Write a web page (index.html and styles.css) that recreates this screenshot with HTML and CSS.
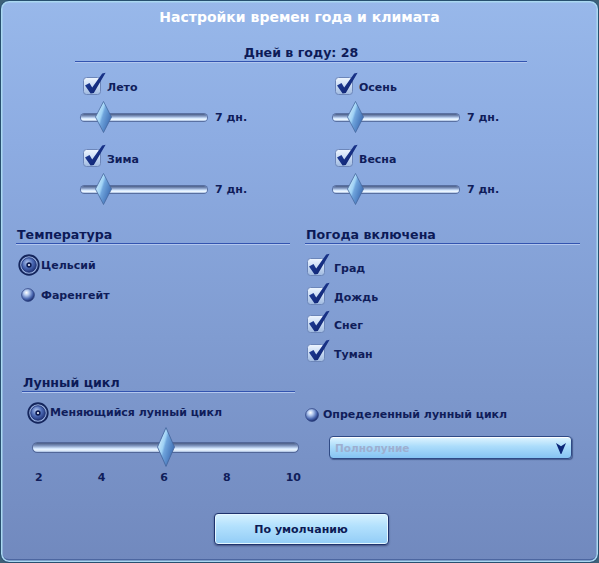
FILE: index.html
```html
<!DOCTYPE html>
<html lang="ru">
<head>
<meta charset="utf-8">
<title>Настройки времен года и климата</title>
<link rel="stylesheet" href="styles.css">
</head>
<body>
<svg class="defs" width="0" height="0" aria-hidden="true">
  <defs>
    <linearGradient id="g-box" x1="0" y1="0" x2="0" y2="1">
      <stop offset="0" stop-color="#eef5ff"/>
      <stop offset="0.5" stop-color="#c9dbf3"/>
      <stop offset="1" stop-color="#9fb9e0"/>
    </linearGradient>
    <linearGradient id="g-check" x1="0" y1="0" x2="1" y2="1">
      <stop offset="0" stop-color="#2446a8"/>
      <stop offset="1" stop-color="#0a1b62"/>
    </linearGradient>
    <radialGradient id="g-ball" cx="0.38" cy="0.32" r="0.7">
      <stop offset="0" stop-color="#ffffff"/>
      <stop offset="0.3" stop-color="#b3c9ef"/>
      <stop offset="0.7" stop-color="#4a67b0"/>
      <stop offset="1" stop-color="#1a2c6a"/>
    </radialGradient>
    <radialGradient id="g-ball-on" cx="0.4" cy="0.35" r="0.7">
      <stop offset="0" stop-color="#b4c9f0"/>
      <stop offset="0.5" stop-color="#4d6bb6"/>
      <stop offset="1" stop-color="#1c2e72"/>
    </radialGradient>
    <linearGradient id="g-thumb" x1="0" y1="0" x2="1" y2="0.6">
      <stop offset="0" stop-color="#e9f8ff"/>
      <stop offset="0.45" stop-color="#9fd2f5"/>
      <stop offset="0.55" stop-color="#6fa4dc"/>
      <stop offset="1" stop-color="#3d6cb3"/>
    </linearGradient>
    <symbol id="i-check" viewBox="0 0 24 24">
      <rect x="1.5" y="5.5" width="17" height="17" rx="3" fill="url(#g-box)" stroke="#6c86b9"/>
      <path d="M3 13.5 L7.5 11 L10.2 15.6 L20.2 1.6 L23.6 0.8 L11.8 21 L8.6 21.4 Z" fill="url(#g-check)"/>
    </symbol>
    <symbol id="i-radio-on" viewBox="0 0 22 22">
      <circle cx="11" cy="11" r="9.7" fill="#9bb3e2" stroke="#14255c" stroke-width="1.9"/>
      <circle cx="11" cy="11" r="7.3" fill="url(#g-ball-on)" stroke="#1d3173" stroke-width="0.8"/>
      <circle cx="11" cy="11" r="2.7" fill="#0b1950"/>
      <circle cx="11" cy="11" r="1.1" fill="#f2f7ff"/>
    </symbol>
    <symbol id="i-radio-off" viewBox="0 0 14 14">
      <circle cx="7" cy="7" r="6.4" fill="url(#g-ball)" stroke="#2a3e7c" stroke-width="0.7"/>
    </symbol>
    <symbol id="i-thumb" viewBox="0 0 18 32" preserveAspectRatio="none">
      <polygon points="9,0.5 17.5,16 9,31.5 0.5,16" fill="url(#g-thumb)" stroke="#46689f" stroke-width="0.8"/>
    </symbol>
  </defs>
</svg>

<div class="window">
  <h1 class="title">Настройки времен года и климата</h1>

  <h2 class="days-head">Дней в году: 28</h2>

  <div class="seasons">
    <div class="season">
      <div class="check"><svg class="cb"><use href="#i-check"/></svg><span>Лето</span></div>
      <div class="slider-row">
        <div class="slider"><div class="track"></div><svg class="thumb" style="left:14px"><use href="#i-thumb"/></svg></div>
        <span class="val">7 дн.</span>
      </div>
    </div>
    <div class="season">
      <div class="check"><svg class="cb"><use href="#i-check"/></svg><span>Осень</span></div>
      <div class="slider-row">
        <div class="slider"><div class="track"></div><svg class="thumb" style="left:14px"><use href="#i-thumb"/></svg></div>
        <span class="val">7 дн.</span>
      </div>
    </div>
    <div class="season">
      <div class="check"><svg class="cb"><use href="#i-check"/></svg><span>Зима</span></div>
      <div class="slider-row">
        <div class="slider"><div class="track"></div><svg class="thumb" style="left:14px"><use href="#i-thumb"/></svg></div>
        <span class="val">7 дн.</span>
      </div>
    </div>
    <div class="season">
      <div class="check"><svg class="cb"><use href="#i-check"/></svg><span>Весна</span></div>
      <div class="slider-row">
        <div class="slider"><div class="track"></div><svg class="thumb" style="left:14px"><use href="#i-thumb"/></svg></div>
        <span class="val">7 дн.</span>
      </div>
    </div>
  </div>

  <div class="mid">
    <section class="temp">
      <h3 class="sec-head">Температура</h3>
      <div class="radio on first"><svg class="rb-on"><use href="#i-radio-on"/></svg><span>Цельсий</span></div>
      <div class="radio off"><svg class="rb-off"><use href="#i-radio-off"/></svg><span>Фаренгейт</span></div>
    </section>
    <section class="weather">
      <h3 class="sec-head">Погода включена</h3>
      <div class="wlist">
        <div class="check"><svg class="cb"><use href="#i-check"/></svg><span>Град</span></div>
        <div class="check"><svg class="cb"><use href="#i-check"/></svg><span>Дождь</span></div>
        <div class="check"><svg class="cb"><use href="#i-check"/></svg><span>Снег</span></div>
        <div class="check"><svg class="cb"><use href="#i-check"/></svg><span>Туман</span></div>
      </div>
    </section>
  </div>

  <div class="moon">
    <section class="moon-left">
      <h3 class="sec-head">Лунный цикл</h3>
      <div class="radio on"><svg class="rb-on"><use href="#i-radio-on"/></svg><span>Меняющийся лунный цикл</span></div>
      <div class="slider big"><div class="track"></div><svg class="thumb" style="left:124px"><use href="#i-thumb"/></svg></div>
      <div class="ticks"><span>2</span><span>4</span><span>6</span><span>8</span><span>10</span></div>
    </section>
    <section class="moon-right">
      <div class="radio off"><svg class="rb-off"><use href="#i-radio-off"/></svg><span>Определенный лунный цикл</span></div>
      <div class="dropdown">
        <span>Полнолуние</span>
        <svg class="arrow" viewBox="0 0 10 12" width="10" height="12"><path d="M0 1 L5 4.2 L10 1 L5.4 12 L4.6 12 Z" fill="#0c2778"/></svg>
      </div>
    </section>
  </div>

  <div class="footer">
    <button class="btn" type="button">По умолчанию</button>
  </div>
</div>
</body>
</html>
```

FILE: styles.css
```css
* {
  box-sizing: border-box;
}

html,
body {
  margin: 0;
  padding: 0;
}

body {
  width: 599px;
  height: 563px;
  overflow: hidden;
  background: #3d6178;
  font-family: "DejaVu Sans", "Noto Sans", sans-serif;
}

.defs {
  display: block;
  width: 0;
  height: 0;
  overflow: hidden;
}

/* dialog frame */
.window {
  width: 599px;
  height: 563px;
  border: 1px solid #27506f;
  border-radius: 9px;
  background: linear-gradient(#98b8ea 0%, #8dace2 25%, #809cd1 60%, #7189be 100%);
  box-shadow: inset 0 0 0 1.5px #aad8f1, inset 0 -3px 0 #4c66a0;
  color: #0d1b58;
}

.title {
  margin: 0;
  height: 33px;
  line-height: 33px;
  text-align: center;
  color: #ffffff;
  font-size: 14px;
  font-weight: bold;
}

.days-head {
  margin: 11px 71px 0 74px;
  font-size: 12.6px;
  line-height: 16px;
  font-weight: bold;
  text-align: center;
  border-bottom: 1px solid #3354b0;
  box-shadow: 0 1px 0 #b3c7ee;
}

/* season checkboxes and sliders */
.seasons {
  display: grid;
  grid-template-columns: 252px 252px;
  padding-left: 81px;
  margin-top: 10px;
  row-gap: 11px;
}

.check {
  display: flex;
  align-items: flex-end;
  height: 24px;
  font-size: 11px;
  font-weight: bold;
  color: #101d5a;
}

.check span {
  line-height: 16px;
  margin-left: 1px;
}

.cb {
  width: 24px;
  height: 24px;
  flex: none;
}

.slider-row {
  display: flex;
  align-items: center;
  height: 32px;
  margin-top: 5px;
}

.slider {
  position: relative;
  width: 126px;
  height: 32px;
  margin-left: -1px;
  flex: none;
}

.track {
  position: absolute;
  left: 0;
  right: 0;
  top: 12.5px;
  height: 7px;
  border-radius: 4px;
  background: linear-gradient(#4a5d86, #7f95bf 30%, #d6e9ff 62%, #eef7ff 78%, #a3bade);
  box-shadow: 0 0 0 1px rgba(62, 80, 128, 0.65);
}

.thumb {
  position: absolute;
  top: 0;
  width: 17px;
  height: 32px;
}

.val {
  margin-left: 8px;
  font-size: 11px;
  font-weight: bold;
  color: #101d5a;
}

/* temperature and weather */
.mid {
  display: grid;
  grid-template-columns: 274px 275px;
  column-gap: 15px;
  padding-left: 15px;
  margin-top: 22px;
}

.sec-head {
  margin: 0;
  padding-left: 1px;
  font-size: 12.6px;
  line-height: 16px;
  font-weight: bold;
  color: #0c1a57;
  border-bottom: 1px solid #3354b0;
  box-shadow: 0 1px 0 #b3c7ee;
}

.radio {
  display: flex;
  align-items: center;
  height: 22px;
  font-size: 11px;
  font-weight: bold;
  color: #101d5a;
}

.rb-on {
  width: 22px;
  height: 22px;
  flex: none;
  margin-right: 1px;
}

.rb-off {
  width: 14px;
  height: 14px;
  flex: none;
  margin-right: 4px;
}

.temp .radio {
  padding-left: 2px;
}

.temp .radio.first {
  margin-top: 10px;
}

.temp .radio.off {
  margin-top: 8px;
  padding-left: 5px;
}

.temp .radio.off .rb-off {
  margin-right: 6px;
}

.wlist {
  display: flex;
  flex-direction: column;
  gap: 4.5px;
  margin-top: 9px;
  padding-left: 1px;
}

.wlist .check span {
  margin-left: 4px;
  line-height: 17px;
}

/* moon cycle */
.moon {
  display: grid;
  grid-template-columns: 273px 270px;
  column-gap: 10px;
  padding-left: 21px;
  margin-top: 12.5px;
}

.moon-left .radio {
  margin-top: 9.5px;
  padding-left: 5px;
}

.slider.big {
  width: 265px;
  height: 40px;
  margin: 3.5px 0 0 11px;
}

.slider.big .track {
  top: 15.5px;
  height: 9px;
  border-radius: 5px;
}

.slider.big .thumb {
  width: 18px;
  height: 40px;
}

.ticks {
  display: flex;
  justify-content: space-between;
  width: 266px;
  margin: 4px 0 0 13px;
  line-height: 14px;
  font-size: 11px;
  font-weight: bold;
  color: #101d5a;
}

.moon-right {
  padding-top: 28.5px;
}

.dropdown {
  display: flex;
  align-items: center;
  justify-content: space-between;
  width: 243px;
  height: 23px;
  margin: 10.5px 0 0 24px;
  padding: 0 5px 0 5px;
  border: 1px solid #2f4a85;
  border-radius: 4px;
  background: linear-gradient(#e0f5ff, #abdcfb 45%, #86c3f2);
  box-shadow: inset 0 1px 0 #ffffff, 1px 1px 1px rgba(20, 40, 90, 0.5);
  font-size: 10.5px;
  font-weight: bold;
  color: #9dafd0;
}

/* footer button */
.footer {
  display: flex;
  justify-content: center;
  padding-left: 3px;
  margin-top: 28px;
}

.btn {
  width: 175px;
  height: 32px;
  border: 1.5px solid #1e336e;
  border-radius: 4px;
  background: linear-gradient(#d6f1ff, #b3e1fd 40%, #92ccf6);
  box-shadow: inset 0 0 0 1px #e4f6ff, 0 1px 2px rgba(0, 0, 40, 0.4);
  font-family: "DejaVu Sans", sans-serif;
  font-size: 11px;
  font-weight: bold;
  color: #0c1b55;
  padding: 0;
}
```
